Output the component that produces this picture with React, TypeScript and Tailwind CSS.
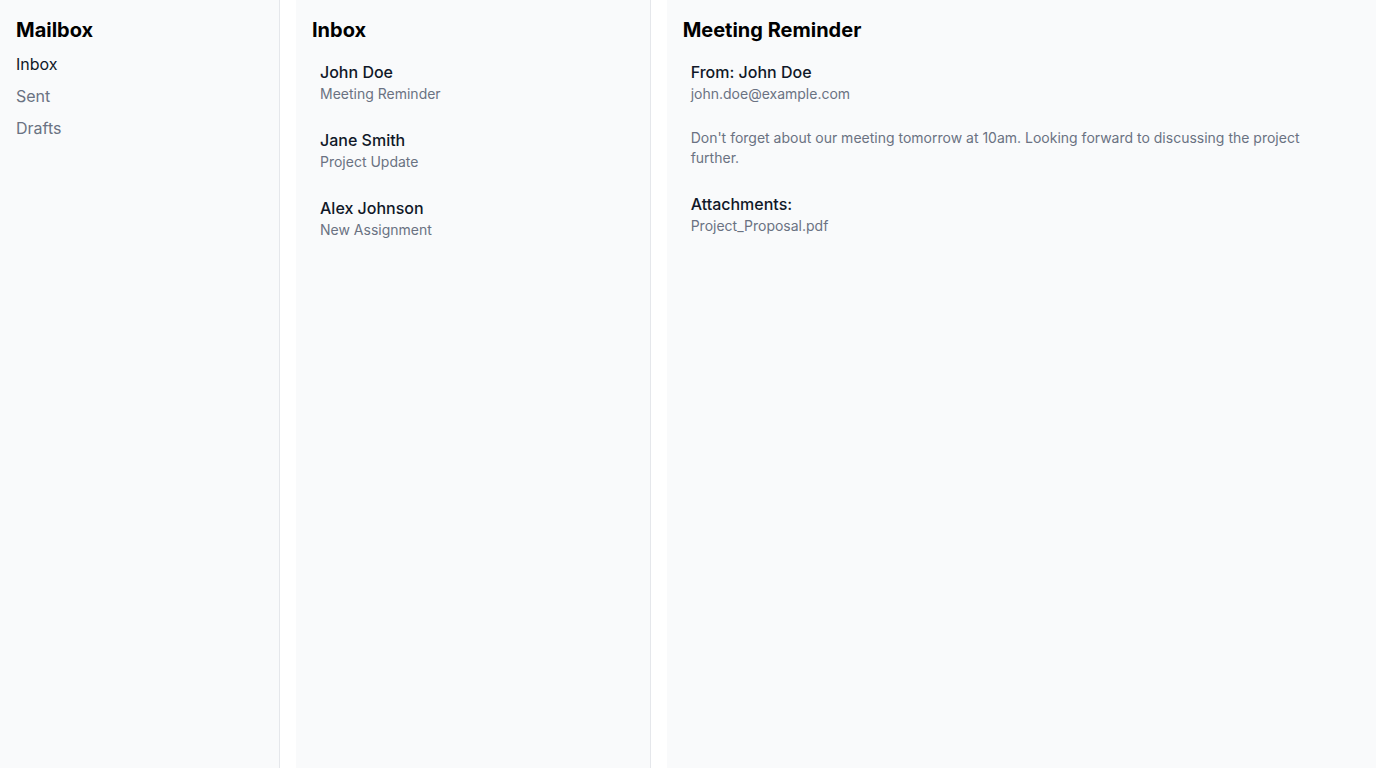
import React from "react";

const emails = [
  { name: "John Doe", subject: "Meeting Reminder" },
  { name: "Jane Smith", subject: "Project Update" },
  { name: "Alex Johnson", subject: "New Assignment" },
];

export default function App() {
  return (
    <div
      className="grid h-[768px] w-full grid-cols-[280px_1fr_2fr] gap-4 bg-white text-gray-900"
      style={{ fontFamily: "Inter, 'Noto Sans', sans-serif" }}
    >
      <aside className="border-r border-gray-200 bg-gray-50 p-4">
        <h1 className="text-xl font-bold text-black">Mailbox</h1>
        <nav className="mt-2 flex flex-col gap-2 text-base">
          <a className="text-gray-900">Inbox</a>
          <a className="text-gray-500">Sent</a>
          <a className="text-gray-500">Drafts</a>
        </nav>
      </aside>
      <section className="min-w-0 border-r border-gray-200 bg-gray-50 p-4">
        <h2 className="text-xl font-bold text-black">Inbox</h2>
        <div className="mt-2 flex flex-col gap-2">
          {emails.map((e) => (
            <div key={e.name} className="p-2">
              <div className="text-base font-medium text-gray-900">{e.name}</div>
              <div className="text-sm text-gray-500">{e.subject}</div>
            </div>
          ))}
        </div>
      </section>
      <section className="min-w-0 bg-gray-50 p-4">
        <h2 className="text-xl font-bold text-black">Meeting Reminder</h2>
        <div className="mt-2 p-2">
          <div className="text-base font-medium text-gray-900">From: John Doe</div>
          <div className="text-sm text-gray-500">john.doe@example.com</div>
          <p className="mt-6 pr-4 text-sm text-gray-500">
            Don't forget about our meeting tomorrow at 10am. Looking forward to discussing the project further.
          </p>
          <div className="mt-6 text-base font-medium text-gray-900">Attachments:</div>
          <div className="text-sm text-gray-500">Project_Proposal.pdf</div>
        </div>
      </section>
    </div>
  );
}
